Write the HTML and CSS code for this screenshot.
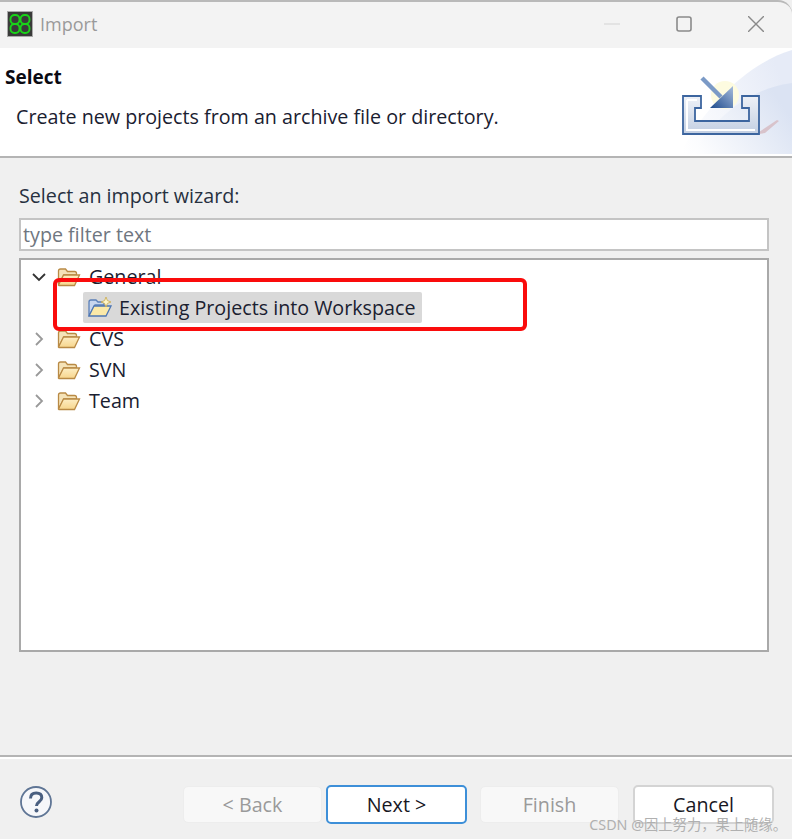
FILE: index.html
```html
<!DOCTYPE html>
<html lang="en">
<head>
<meta charset="utf-8">
<title>Import</title>
<link rel="stylesheet" href="styles.css">
</head>
<body>
<div class="dialog">
  <header class="titlebar">
    <svg class="app-icon" width="26" height="26" viewBox="0 0 26 26">
      <rect x="0.5" y="0.5" width="25" height="25" fill="#3a3a3a" stroke="#aaa"/>
      <g fill="none" stroke="#19d419" stroke-width="1.900">
        <rect x="3.500" y="4" width="9" height="9" rx="4"/>
        <rect x="13.500" y="4" width="9" height="9" rx="4"/>
        <rect x="3.500" y="13" width="9" height="9" rx="4"/>
        <rect x="13.500" y="13" width="9" height="9" rx="4"/>
      </g>
    </svg>
    <span class="title">Import</span>
    <div class="window-controls">
      <svg width="16" height="16" viewBox="0 0 16 16"><path d="M0 8h16" stroke="#dcdcdc" stroke-width="1.4"/></svg>
      <svg width="16" height="16" viewBox="0 0 16 16"><rect x="1" y="1" width="14" height="14" rx="2" fill="none" stroke="#8a8a8a" stroke-width="1.6"/></svg>
      <svg width="16" height="16" viewBox="0 0 16 16"><path d="M0 0l16 16M16 0L0 16" stroke="#8a8a8a" stroke-width="1.4"/></svg>
    </div>
  </header>

  <section class="banner">
    <div class="banner-text">
      <h1>Select</h1>
      <p>Create new projects from an archive file or directory.</p>
    </div>
    <svg class="banner-art" width="112" height="104" viewBox="0 0 112 104">
      <defs>
        <linearGradient id="wash" x1="0" y1="0.9" x2="1" y2="0.5">
          <stop offset="0" stop-color="#fff"/>
          <stop offset="1" stop-color="#e6ebf7"/>
        </linearGradient>
        <linearGradient id="wash2" x1="0" y1="1" x2="1" y2="0.5">
          <stop offset="0" stop-color="#fff"/>
          <stop offset="1" stop-color="#dbe3f3"/>
        </linearGradient>
        <linearGradient id="tray" x1="0" y1="0" x2="0" y2="1">
          <stop offset="0" stop-color="#eef1f7"/>
          <stop offset="1" stop-color="#c3cfe2"/>
        </linearGradient>
        <linearGradient id="arrow" x1="0" y1="1" x2="1" y2="0">
          <stop offset="0" stop-color="#1f4c8d"/>
          <stop offset="1" stop-color="#a6bcdc"/>
        </linearGradient>
      </defs>
      <path d="M0 104C25 55 70 12 112 0V104z" fill="url(#wash)"/>
      <path d="M12 104C40 60 75 38 112 33V104z" fill="url(#wash2)"/>
      <path d="M79 84l6-1 14-12 -2-1-18 12z" fill="#d8c3cb"/>
      <circle cx="45" cy="45" r="14" fill="#fdfbe0"/>
      <path d="M3 46h18v12h-6v13h54v-13h-7v-12h17v38H3z" fill="url(#tray)" stroke="#3c659f" stroke-width="1.800"/>
      <path d="M7 50h10M7 50v30h68" fill="none" stroke="#fff" stroke-width="2"/>
      <path d="M22 28l19 19" stroke="#7b9ac6" stroke-width="4.500"/>
      <path d="M53 36V58H30z" fill="url(#arrow)"/>
    </svg>
  </section>

  <main class="content">
    <label class="prompt" for="filter">Select an import wizard:</label>
    <input id="filter" class="filter" type="text" placeholder="type filter text">
    <div class="tree">
      <div class="node">
        <svg class="twisty" width="14" height="14" viewBox="0 0 14 14"><path d="M1 4l6 6 6-6" fill="none" stroke="#333" stroke-width="1.800"/></svg>
        <svg class="folder" width="24" height="20" viewBox="0 0 24 20"><use href="#fold"/></svg>
        <span>General</span>
      </div>
      <div class="node child">
        <div class="selected">
          <svg width="26" height="22" viewBox="0 0 26 22">
            <path d="M2 19V5q0-2 2-2h5l2 2h6v3H8L2 19z" fill="#c7d6ee" stroke="#5a7fb8" stroke-width="1.300"/>
            <path d="M2 19l5-10h17l-5 10z" fill="#fbe9a8" stroke="#4e77b4" stroke-width="1.300"/>
            <path d="M19 0l1.400 3.600L24 5l-3.600 1.400L19 10l-1.400-3.600L14 5l3.600-1.400z" fill="#fff6c8" stroke="#c9a94f" stroke-width=".8"/>
          </svg>
          <span>Existing Projects into Workspace</span>
        </div>
      </div>
      <div class="node">
        <svg class="twisty" width="14" height="14" viewBox="0 0 14 14"><path d="M4 1l6 6-6 6" fill="none" stroke="#999" stroke-width="1.800"/></svg>
        <svg class="folder" width="24" height="20" viewBox="0 0 24 20"><use href="#fold"/></svg>
        <span>CVS</span>
      </div>
      <div class="node">
        <svg class="twisty" width="14" height="14" viewBox="0 0 14 14"><path d="M4 1l6 6-6 6" fill="none" stroke="#999" stroke-width="1.800"/></svg>
        <svg class="folder" width="24" height="20" viewBox="0 0 24 20"><use href="#fold"/></svg>
        <span>SVN</span>
      </div>
      <div class="node">
        <svg class="twisty" width="14" height="14" viewBox="0 0 14 14"><path d="M4 1l6 6-6 6" fill="none" stroke="#999" stroke-width="1.800"/></svg>
        <svg class="folder" width="24" height="20" viewBox="0 0 24 20"><use href="#fold"/></svg>
        <span>Team</span>
      </div>
    </div>
  </main>

  <footer class="footer">
    <svg class="help" width="34" height="34" viewBox="0 0 34 34">
      <circle cx="17" cy="17" r="15" fill="#f6f7fa" stroke="#5f7595" stroke-width="1.800"/>
      <path d="M11.500 13.500q0-5.500 5.700-5.500 5.600 0 5.600 4.800c0 4-5.300 4-5.300 8.200" fill="none" stroke="#4a5f80" stroke-width="3"/>
      <circle cx="17.500" cy="25.600" r="2" fill="#4a5f80"/>
    </svg>
    <div class="buttons">
      <button class="btn" disabled>&lt; Back</button>
      <button class="btn primary">Next &gt;</button>
      <button class="btn finish" disabled>Finish</button>
      <button class="btn cancel">Cancel</button>
    </div>
  </footer>
</div>

<div class="callout"></div>
<div class="watermark">CSDN @因上努力，果上随缘。</div>

<svg class="defs" width="0" height="0">
  <defs>
    <linearGradient id="foldfill" x1="0" y1="0" x2="0" y2="1">
      <stop offset="0" stop-color="#fdeec4"/>
      <stop offset="1" stop-color="#f7d58c"/>
    </linearGradient>
    <g id="fold">
      <path d="M1.500 17V4q0-2 2-2h5l2 2.500h7q2 0 2 2V8H7L1.500 18z" fill="#f5e3b8" stroke="#b98a45" stroke-width="1.300"/>
      <path d="M1.500 18l5-10h16l-5 10.500H2z" fill="url(#foldfill)" stroke="#b98a45" stroke-width="1.300"/>
    </g>
  </defs>
</svg>
</body>
</html>
```

FILE: styles.css
```css
* { box-sizing: border-box; }

html, body {
  margin: 0;
  height: 100%;
}

body {
  position: relative;
  width: 792px;
  height: 839px;
  overflow: hidden;
  font-family: "Open Sans", "Noto Sans", sans-serif;
  font-size: 19.700px;
  color: #1a2030;
  background: #f0f0f0;
}

.dialog {
  display: flex;
  flex-direction: column;
  height: 839px;
}

.titlebar {
  display: flex;
  align-items: center;
  flex: 0 0 48px;
  padding: 0 28px 2px 7px;
  background: #f3f3f3;
  border-top: 2px solid #b9b9b9;
  border-top-right-radius: 14px;
}

.app-icon { margin-right: 7px; }

.title {
  font-size: 18px;
  color: #9a9a9a;
}

.window-controls {
  display: flex;
  align-items: center;
  gap: 56px;
  margin-left: auto;
}

.banner {
  display: flex;
  justify-content: space-between;
  flex: 0 0 110px;
  background: #fff;
  border-bottom: 2px solid #b4b4b4;
}

.banner-text {
  padding: 15px 0 0 5px;
}

.banner h1 {
  margin: 0;
  font-size: 19px;
  line-height: 28px;
  font-weight: 700;
  color: #0a0a12;
}

.banner p {
  margin: 13px 0 0 11px;
  line-height: 26px;
}

.banner-art {
  align-self: flex-end;
  margin-bottom: 2px;
}

.content {
  display: flex;
  flex-direction: column;
  flex: 0 0 599px;
  padding: 25px 23px 0 19px;
  border-bottom: 2px solid #b4b4b4;
}

.prompt {
  line-height: 26px;
  color: #27303f;
}

.filter {
  width: 100%;
  height: 33px;
  margin-top: 9px;
  padding: 0 2px;
  border: 2px solid #c4c4c4;
  background: #fff;
  font: inherit;
  color: inherit;
}

.filter::placeholder {
  color: #6f7680;
  opacity: 1;
}

.tree {
  height: 394px;
  margin-top: 7px;
  padding-top: 1px;
  border: 2px solid #a9a9a9;
  background: #fff;
}

.node {
  display: flex;
  align-items: center;
  height: 31px;
  padding-left: 11px;
}

.twisty { margin-right: 11px; }

.folder { margin-right: 8px; }

.child { padding-left: 62px; }

.selected {
  display: flex;
  align-items: center;
  gap: 6px;
  height: 31px;
  padding: 0 7px 0 4px;
  background: #d9d9d9;
  border-radius: 2px;
}

.footer {
  display: flex;
  justify-content: space-between;
  flex: 1;
  padding: 26px 18px 0 19px;
  border-top: 2px solid #fff;
}

.buttons {
  display: flex;
  align-items: center;
  gap: 4px;
  height: 39px;
}

.btn {
  width: 139px;
  height: 37px;
  padding: 0;
  border: 1px solid #ededed;
  border-radius: 5px;
  background: #f8f8f8;
  font: inherit;
  color: #9a9a9a;
}

.primary {
  width: 141px;
  height: 39px;
  border: 2px solid #3d8fd8;
  background: #fff;
  color: #17171f;
}

.finish { margin-left: 9px; }

.cancel {
  width: 141px;
  height: 39px;
  margin-left: 10px;
  border: 2px solid #d4d4d4;
  background: #fff;
  color: #17171f;
}

.callout {
  position: absolute;
  left: 53px;
  top: 278px;
  width: 474px;
  height: 53px;
  border: 4px solid #fa0c0c;
  border-radius: 6px;
}

.watermark {
  position: absolute;
  right: 5px;
  top: 815px;
  font-family: "Noto Sans", "Noto Sans CJK SC", sans-serif;
  font-size: 14.300px;
  line-height: 20px;
  color: #b0b0b0;
}

.defs {
  position: absolute;
}
```
